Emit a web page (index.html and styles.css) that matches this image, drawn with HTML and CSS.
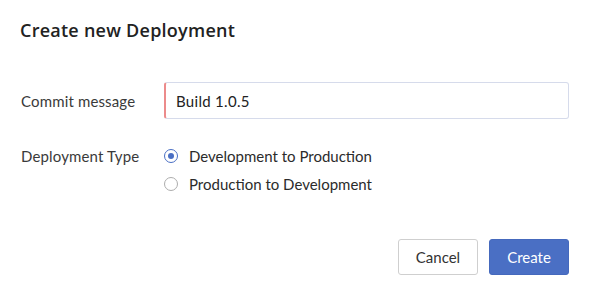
FILE: index.html
```html
<!DOCTYPE html>
<html>
<head>
<meta charset="utf-8">
<link rel="stylesheet" href="styles.css">
</head>
<body>
<div class="dialog">
  <h1 class="title">Create new Deployment</h1>
  <div class="form">
    <div class="row">
      <label class="label">Commit message</label>
      <div class="input">Build 1.0.5</div>
    </div>
    <div class="row row-top">
      <span class="label">Deployment Type</span>
      <div class="radios">
        <div class="radio"><span class="dot checked"></span><span>Development to Production</span></div>
        <div class="radio"><span class="dot"></span><span>Production to Development</span></div>
      </div>
    </div>
  </div>
  <div class="actions">
    <button class="btn btn-cancel">Cancel</button>
    <button class="btn btn-create">Create</button>
  </div>
</div>
</body>
</html>
```
FILE: styles.css
```css
* { box-sizing: border-box; }
html, body { margin: 0; background: #fff; }
body { font-family: Lato, "Open Sans", sans-serif; color: #2b2b2b; }
.dialog { width: 590px; height: 296px; padding: 18px 21px 0 20px; }
.title { margin: 0; font-family: "Open Sans", Lato, sans-serif; font-size: 18px; font-weight: 600; color: #222; line-height: 24px; letter-spacing: 0.25px; }
.form { margin-top: 40px; display: flex; flex-direction: column; gap: 27px; }
.row { display: grid; grid-template-columns: 144px 405px; align-items: center; }
.row-top { align-items: start; }
.label { font-size: 15px; color: #3a3a3a; padding-left: 1px; letter-spacing: 0.15px; }
.row-top .label { line-height: 20px; margin-top: 0; }
.input { height: 37px; border: 1px solid #d6dbeb; border-left: 2px solid #ec8b8b; border-radius: 3px; padding: 0 10px; display: flex; align-items: center; font-size: 15px; color: #222; letter-spacing: 0.3px; }
.radios { display: flex; flex-direction: column; gap: 8px; padding-left: 0; }
.radio { display: flex; align-items: center; gap: 11px; font-size: 15px; color: #2b2b2b; line-height: 20px; }
.dot { width: 14px; height: 14px; border-radius: 50%; border: 1px solid #adadad; flex: none; position: relative; }
.dot.checked { border-color: #4a6fc4; }
.dot.checked::after { content: ""; position: absolute; left: 3px; top: 3px; width: 6px; height: 6px; border-radius: 50%; background: #4a6fc4; }
.actions { display: flex; justify-content: flex-end; gap: 11px; margin-top: 45px; }
.btn { font-family: inherit; font-size: 15px; height: 36px; border-radius: 3px; cursor: pointer; }
.btn-cancel { width: 80px; background: #fff; border: 1px solid #cfcfcf; color: #333; }
.btn-create { width: 80px; background: #4a6fc4; border: 1px solid #4569bd; color: #fff; }
```
